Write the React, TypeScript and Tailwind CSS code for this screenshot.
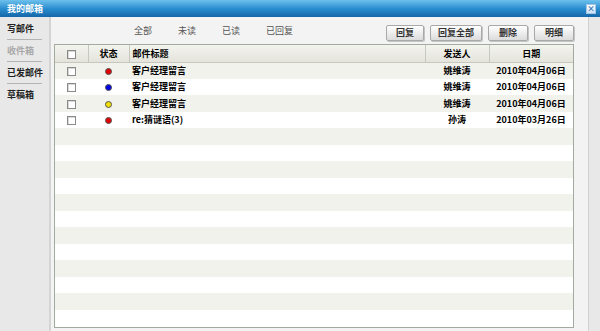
import React from "react";

const MAILS = [
  { color: "bg-[#e00000]", title: "客户经理留言", from: "姚维涛", date: "2010年04月06日" },
  { color: "bg-[#0000e0]", title: "客户经理留言", from: "姚维涛", date: "2010年04月06日" },
  { color: "bg-[#f0e000]", title: "客户经理留言", from: "姚维涛", date: "2010年04月06日" },
  { color: "bg-[#e00000]", title: "re:猜谜语(3)", from: "孙涛", date: "2010年03月26日" },
];

const MENU = [
  { label: "写邮件", active: true },
  { label: "收件箱", active: false },
  { label: "已发邮件", active: true },
  { label: "草稿箱", active: true },
];

const BUTTONS = [
  ["回复", "w-[38px]"],
  ["回复全部", "w-[52px]"],
  ["删除", "w-[40px]"],
  ["明细", "w-[40px]"],
];

const TOTAL_ROWS = 16;

function Checkbox() {
  return <span className="inline-block h-[9px] w-[9px] border border-[#8a8a8a] bg-white align-middle shadow-[inset_1px_1px_0_#d8d8d8]" />;
}

export default function App() {
  const rows = Array.from({ length: TOTAL_ROWS }, (_, i) => MAILS[i] ?? null);

  return (
    <div className="flex h-[331px] w-[600px] flex-col overflow-hidden bg-[#e8e8e8] font-['Noto_Sans_CJK_SC',sans-serif] text-[9px] text-black">
      {/* 标题栏 */}
      <div className="flex h-[17px] shrink-0 items-center justify-between bg-gradient-to-b from-[#6cc0ec] via-[#2a8fd0] to-[#1566a8] pl-[7px] pr-[4px]">
        <span className="font-bold text-white">我的邮箱</span>
        <span className="flex h-[10px] w-[10px] items-center justify-center border border-[#9fc6e6] bg-gradient-to-b from-white to-[#cfe2f3] text-[8px] font-bold leading-none text-[#2b6fb5]">×</span>
      </div>

      <div className="flex flex-1">
        {/* 左侧菜单 */}
        <div className="w-[51px] border-r-2 border-[#d4d4d4] pt-[3px]">
          {MENU.map((m, i) => (
            <div key={m.label}>
              <div className={`flex h-[17px] items-center pl-[7px] font-bold ${m.active ? "text-[#222]" : "text-[#a8a8a8]"}`}>
                {m.label}
              </div>
              {i < MENU.length - 1 && <div className="mx-[7px] my-[2px] h-[1px] bg-[#b4b4b4]" />}
            </div>
          ))}
        </div>

        {/* 主区域 */}
        <div className="flex flex-1 flex-col bg-[#f3f3f3] pb-[3px] pl-[3px] pr-[14px]">
          <div className="flex h-[27px] shrink-0 items-center">
            <div className="ml-[80px] flex gap-[26px] text-[#555]">
              <span>全部</span>
              <span>未读</span>
              <span>已读</span>
              <span>已回复</span>
            </div>
            <div className="ml-auto mt-[4px] flex gap-[6px]">
              {BUTTONS.map(([label, w]) => (
                <button
                  key={label}
                  className={`${w} h-[16px] rounded-[2px] border border-[#a8a8a8] bg-gradient-to-b from-white to-[#dcdcdc] text-[9px] font-bold text-[#333] shadow-[1px_1px_0_#c4c4c4]`}
                >
                  {label}
                </button>
              ))}
            </div>
          </div>

          <div className="flex-1 overflow-hidden border border-[#a3aba0] bg-white">
            <table className="w-full table-fixed border-collapse">
              <thead>
                <tr className="h-[17px] bg-gradient-to-b from-[#f4f4ef] to-[#e4e4dc] font-bold">
                  <th className="w-[33px] border-r border-b border-[#c6c8c0] text-center"><Checkbox /></th>
                  <th className="w-[41px] border-r border-b border-[#c6c8c0] text-center">状态</th>
                  <th className="border-r border-b border-[#c6c8c0] pl-[3px] text-left">邮件标题</th>
                  <th className="w-[64px] border-r border-b border-[#c6c8c0] text-center">发送人</th>
                  <th className="w-[84px] border-b border-[#c6c8c0] text-center">日期</th>
                </tr>
              </thead>
              <tbody>
                {rows.map((r, i) => (
                  <tr key={i} className={`h-[16.5px] ${i % 2 === 0 ? "bg-[#f2f2ed]" : "bg-white"}`}>
                    <td className="text-center">{r && <Checkbox />}</td>
                    <td className="text-center">
                      {r && <span className={`inline-block h-[7px] w-[7px] rounded-full border border-[#555] align-middle ${r.color}`} />}
                    </td>
                    <td className="pl-[3px] font-bold">{r?.title}</td>
                    <td className="text-center font-bold">{r?.from}</td>
                    <td className="text-center font-bold">{r?.date}</td>
                  </tr>
                ))}
              </tbody>
            </table>
          </div>
        </div>

        {/* 右侧边栏 */}
        <div className="w-[12px] border-l border-[#d0d0d0] bg-[#e8e8e8]" />
      </div>
    </div>
  );
}
